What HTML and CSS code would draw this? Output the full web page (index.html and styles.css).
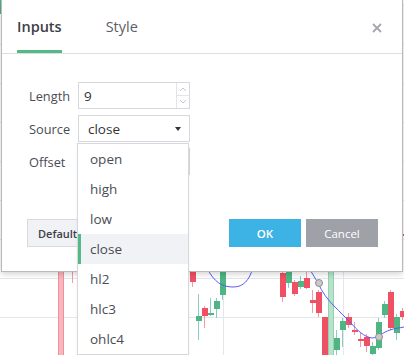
FILE: index.html
```html
<!DOCTYPE html>
<html>
<head>
<meta charset="utf-8">
<link rel="stylesheet" href="styles.css">
</head>
<body>
<svg class="chart" width="404" height="355" viewBox="0 0 404 355">
  <g stroke="#e2e8ee" stroke-width="1">
    <line x1="0" y1="5.5" x2="404" y2="5.5"/>
    <line x1="0" y1="44.5" x2="404" y2="44.5"/>
    <line x1="0" y1="83.5" x2="404" y2="83.5"/>
    <line x1="0" y1="122.5" x2="404" y2="122.5"/>
    <line x1="0" y1="161.5" x2="404" y2="161.5"/>
    <line x1="0" y1="200.5" x2="404" y2="200.5"/>
    <line x1="0" y1="239.5" x2="404" y2="239.5"/>
    <line x1="0" y1="278.5" x2="404" y2="278.5"/>
    <line x1="0" y1="317.5" x2="404" y2="317.5"/>
    <line x1="223.5" y1="0" x2="223.5" y2="355"/>
    <line x1="343.5" y1="0" x2="343.5" y2="355"/>
  </g>
  <rect x="0" y="0" width="2" height="14" fill="#50b584"/>
  <rect x="58.5" y="262.5" width="5" height="100" fill="#f8b6bd" stroke="#f28f9b"/>
  <rect x="328.5" y="262.5" width="5" height="100" fill="#b7e3ca" stroke="#91d1ae"/>
  <g stroke-width="1">
    <line x1="72.5" y1="268" x2="72.5" y2="283" stroke="#f59aa5"/>
    <line x1="192.5" y1="270" x2="192.5" y2="287" stroke="#f59aa5"/>
    <line x1="198.5" y1="294" x2="198.5" y2="340" stroke="#8fc9c6"/>
    <line x1="204.5" y1="306" x2="204.5" y2="328" stroke="#f59aa5"/>
    <line x1="210.5" y1="298" x2="210.5" y2="316" stroke="#8fc9c6"/>
    <line x1="216.5" y1="298" x2="216.5" y2="318" stroke="#8fc9c6"/>
    <line x1="222.5" y1="270" x2="222.5" y2="300" stroke="#8fc9c6"/>
    <line x1="282.5" y1="270" x2="282.5" y2="302" stroke="#f59aa5"/>
    <line x1="288.5" y1="270" x2="288.5" y2="288" stroke="#8fc9c6"/>
    <line x1="294.5" y1="280" x2="294.5" y2="296" stroke="#f59aa5"/>
    <line x1="300.5" y1="276" x2="300.5" y2="289" stroke="#8fc9c6"/>
    <line x1="306.5" y1="270" x2="306.5" y2="289" stroke="#f59aa5"/>
    <line x1="312.5" y1="290" x2="312.5" y2="313" stroke="#f59aa5"/>
    <line x1="318.5" y1="290" x2="318.5" y2="317" stroke="#f59aa5"/>
    <line x1="336.5" y1="330" x2="336.5" y2="355" stroke="#8fc9c6"/>
    <line x1="342.5" y1="318" x2="342.5" y2="347" stroke="#8fc9c6"/>
    <line x1="348.5" y1="313" x2="348.5" y2="328" stroke="#f59aa5"/>
    <line x1="354.5" y1="322" x2="354.5" y2="335" stroke="#f59aa5"/>
    <line x1="360.5" y1="332" x2="360.5" y2="347" stroke="#f59aa5"/>
    <line x1="366.5" y1="334" x2="366.5" y2="352" stroke="#f59aa5"/>
    <line x1="372.5" y1="342" x2="372.5" y2="355" stroke="#8fc9c6"/>
    <line x1="378.5" y1="318" x2="378.5" y2="350" stroke="#8fc9c6"/>
    <line x1="384.5" y1="301" x2="384.5" y2="318" stroke="#8fc9c6"/>
    <line x1="390.5" y1="290" x2="390.5" y2="330" stroke="#f59aa5"/>
    <line x1="396.5" y1="314" x2="396.5" y2="340" stroke="#8fc9c6"/>
    <line x1="402.5" y1="308" x2="402.5" y2="320" stroke="#f59aa5"/>
  </g>
  <g fill="#ef5064">
    <rect x="190" y="272" width="6" height="10"/>
    <rect x="202" y="308" width="6" height="8"/>
    <rect x="280" y="273" width="6" height="24"/>
    <rect x="292" y="282" width="6" height="12"/>
    <rect x="304" y="278" width="6" height="10"/>
    <rect x="310" y="300" width="6" height="3"/>
    <rect x="316" y="292" width="6" height="21"/>
    <rect x="322" y="317" width="6" height="38"/>
    <rect x="346" y="317" width="6" height="8"/>
    <rect x="352" y="330" width="6" height="2"/>
    <rect x="358" y="339" width="6" height="2"/>
    <rect x="364" y="337" width="6" height="9"/>
    <rect x="388" y="292" width="6" height="36"/>
    <rect x="400" y="311" width="4" height="6"/>
    <rect x="403" y="234" width="1" height="2"/>
  </g>
  <g fill="#4eb583">
    <rect x="196" y="316" width="6" height="5"/>
    <rect x="208" y="313" width="6" height="2"/>
    <rect x="214" y="301" width="6" height="8"/>
    <rect x="220" y="268" width="6" height="27"/>
    <rect x="286" y="268" width="6" height="15"/>
    <rect x="298" y="281" width="6" height="6"/>
    <rect x="334" y="338" width="6" height="12"/>
    <rect x="340" y="321" width="6" height="9"/>
    <rect x="370" y="346" width="6" height="8"/>
    <rect x="376" y="322" width="6" height="26"/>
    <rect x="382" y="304" width="6" height="11"/>
    <rect x="394" y="317" width="6" height="16"/>
  </g>
  <g fill="none" stroke="#5b5bf7" stroke-width="1">
    <path d="M207 268 C214 282, 222 287, 233 287 C244 287, 249 280, 253 268"/>
    <path d="M309 268 L318 283 C322 292, 328 300, 334 306 C340 312, 346 318, 351 323 C357 330, 364 337, 372 338 C378 338, 383 332, 390 330 C395 328, 400 328, 404 327"/>
  </g>
  <g fill="#c9c9cc" stroke="#8e8e92" stroke-width="1">
    <circle cx="319" cy="283" r="3.5"/>
    <circle cx="379" cy="337" r="3.5"/>
  </g>
</svg>

<div class="dialog">
  <div class="header">
    <div class="tab active">Inputs</div>
    <div class="tab">Style</div>
    <div class="close">
      <svg width="10" height="10" viewBox="0 0 10 10"><path d="M1 1 L9 9 M9 1 L1 9" stroke="#a3a6af" stroke-width="1.8" fill="none"/></svg>
    </div>
  </div>
  <div class="content">
    <div class="form">
      <div class="label">Length</div>
      <div class="field">
        <span class="value">9</span>
        <div class="spinner">
          <svg width="12" height="26" viewBox="0 0 12 26">
            <line x1="0" y1="12.5" x2="12" y2="12.5" stroke="#e3e4e8"/>
            <path d="M3 8 L6 5 L9 8" stroke="#c3c5cb" fill="none"/>
            <path d="M3 17 L6 20 L9 17" stroke="#c3c5cb" fill="none"/>
          </svg>
        </div>
      </div>
      <div class="label">Source</div>
      <div class="field select">
        <span class="value">close</span>
        <span class="caret"></span>
      </div>
      <div class="label">Offset</div>
      <div class="field"></div>
    </div>
    <div class="footer">
      <div class="btn default">Defaults</div>
      <div class="spacer"></div>
      <div class="btn ok">OK</div>
      <div class="btn cancel">Cancel</div>
    </div>
  </div>
</div>

<div class="menu">
  <div class="item">open</div>
  <div class="item">high</div>
  <div class="item">low</div>
  <div class="item selected">close</div>
  <div class="item">hl2</div>
  <div class="item">hlc3</div>
  <div class="item">ohlc4</div>
</div>
</body>
</html>
```

FILE: styles.css
```css
html, body {
  margin: 0;
  padding: 0;
  width: 404px;
  height: 355px;
  overflow: hidden;
  background: #ffffff;
  font-family: "Open Sans", "Noto Sans", sans-serif;
}

.chart {
  position: absolute;
  left: 0;
  top: 0;
}

.dialog {
  position: absolute;
  left: 1px;
  top: -1px;
  width: 400px;
  height: 271px;
  background: #ffffff;
  border: 1px solid #b8b9bd;
  box-shadow: 0 2px 6px rgba(0, 0, 0, 0.18);
  display: flex;
  flex-direction: column;
}

.header {
  height: 53px;
  border-bottom: 1px solid #dcdde1;
  display: flex;
  align-items: stretch;
  padding-left: 15px;
  padding-right: 20px;
  box-sizing: content-box;
}

.tab {
  font-size: 14.5px;
  color: #5d6067;
  display: flex;
  align-items: center;
  padding-top: 3px;
  border-bottom: 3px solid transparent;
  margin-right: 44px;
}

.tab.active {
  font-weight: 600;
  color: #3d4048;
  border-bottom-color: #53b987;
}

.close {
  margin-left: auto;
  display: flex;
  align-items: center;
  padding-top: 2px;
}

.content {
  flex: 1;
  display: flex;
  flex-direction: column;
  padding: 28px 24px 24px 26px;
}

.form {
  display: grid;
  grid-template-columns: 50px 112px;
  grid-auto-rows: 27px;
  row-gap: 6px;
  align-items: center;
}

.label {
  font-size: 12.8px;
  color: #4a4c53;
  padding-left: 1px;
}

.field {
  height: 27px;
  box-sizing: border-box;
  border: 1px solid #d6d8dd;
  display: flex;
  align-items: center;
  font-size: 13.5px;
  color: #333;
}

.field .value {
  padding-left: 5px;
  flex: 1;
}

.field.select .value {
  padding-left: 9px;
}

.spinner {
  width: 12px;
  height: 25px;
  border-left: 1px solid #e3e4e8;
}

.spinner svg {
  display: block;
}

.caret {
  width: 0;
  height: 0;
  border-left: 3px solid transparent;
  border-right: 3px solid transparent;
  border-top: 4px solid #333;
  margin-right: 8px;
}

.footer {
  margin-top: auto;
  margin-left: -1px;
  display: flex;
  gap: 5px;
}

.spacer {
  flex: 1;
}

.btn {
  height: 28px;
  box-sizing: border-box;
  display: flex;
  align-items: center;
  justify-content: center;
  font-size: 11.5px;
  font-weight: 600;
}

.btn.default {
  padding: 0 10px;
  background: #f1f2f5;
  border: 1px solid #d9dadf;
  color: #3d4048;
  font-size: 11px;
}

.btn.ok {
  width: 72px;
  background: #3cb3e4;
  color: #ffffff;
}

.btn.cancel {
  width: 72px;
  background: #9fa1a8;
  color: #ffffff;
  font-weight: 500;
}

.menu {
  position: absolute;
  left: 77px;
  top: 143px;
  width: 112px;
  box-sizing: border-box;
  background: #ffffff;
  border: 1px solid #d6d8dd;
  box-shadow: 0 1px 3px rgba(0, 0, 0, 0.06);
}

.item {
  height: 30px;
  display: flex;
  align-items: center;
  padding-left: 12px;
  font-size: 13.5px;
  color: #4a4c53;
}

.item.selected {
  background: #f0f2f6;
  box-shadow: inset 3px 0 0 #53b987;
}
```
